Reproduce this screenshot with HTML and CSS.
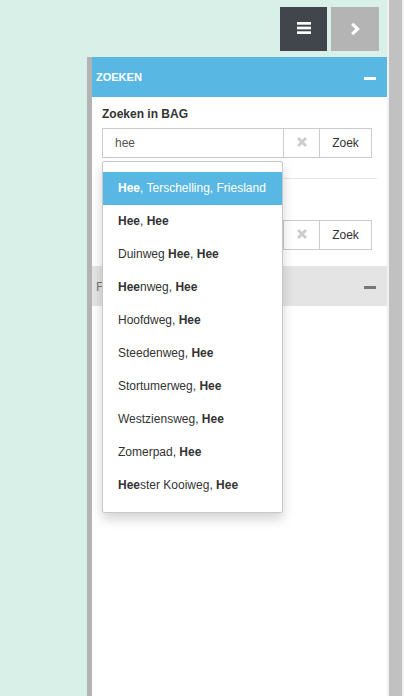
FILE: index.html
```html
<!DOCTYPE html>
<html lang="nl">
<head>
<meta charset="utf-8">
<title>Zoeken</title>
<link rel="stylesheet" href="styles.css">
</head>
<body>
<div class="page">
  <div class="main">
    <div class="toolbar">
      <button class="tb-btn tb-dark" type="button" aria-label="Menu">
        <svg width="14" height="12" viewBox="0 0 14 12"><rect x="0" y="0" width="14" height="2.7" fill="#fff"/><rect x="0" y="4.65" width="14" height="2.7" fill="#fff"/><rect x="0" y="9.3" width="14" height="2.7" fill="#fff"/></svg>
      </button>
      <button class="tb-btn tb-gray" type="button" aria-label="Volgende">
        <svg width="10" height="14" viewBox="0 0 10 14"><polyline points="2.2,1.8 7.6,7 2.2,12.2" fill="none" stroke="#fff" stroke-width="3.2"/></svg>
      </button>
    </div>
    <div class="panel">
      <div class="sec-head sec-active">
        <span class="sec-title">ZOEKEN</span>
        <span class="minus"></span>
      </div>
      <div class="sec-body">
        <div class="form-group">
          <label class="lbl">Zoeken in BAG</label>
          <div class="input-group">
            <div class="input">hee</div>
            <button class="btn-clear" type="button" aria-label="Wissen">
              <svg width="10" height="10" viewBox="0 0 10 10"><path d="M1 1 L9 9 M9 1 L1 9" stroke="#cccccc" stroke-width="3"/></svg>
            </button>
            <button class="btn-go" type="button">Zoek</button>
            <ul class="dropdown">
              <li class="active"><b>Hee</b>, Terschelling, Friesland</li>
              <li><b>Hee</b>, <b>Hee</b></li>
              <li>Duinweg <b>Hee</b>, <b>Hee</b></li>
              <li><b>Hee</b><span>nweg</span>, <b>Hee</b></li>
              <li>Hoofdweg, <b>Hee</b></li>
              <li>Steedenweg, <b>Hee</b></li>
              <li>Stortumerweg, <b>Hee</b></li>
              <li>Westziensweg, <b>Hee</b></li>
              <li>Zomerpad, <b>Hee</b></li>
              <li><b>Hee</b><span>ster Kooiweg</span>, <b>Hee</b></li>
            </ul>
          </div>
        </div>
        <div class="sep"></div>
        <div class="form-group">
          <label class="lbl">Adres zoeken</label>
          <div class="input-group">
            <div class="input"></div>
            <button class="btn-clear" type="button" aria-label="Wissen">
              <svg width="10" height="10" viewBox="0 0 10 10"><path d="M1 1 L9 9 M9 1 L1 9" stroke="#cccccc" stroke-width="3"/></svg>
            </button>
            <button class="btn-go" type="button">Zoek</button>
          </div>
        </div>
      </div>
      <div class="sec-head sec-muted">
        <span class="sec-title2">Favorieten</span>
        <span class="minus minus-gray"></span>
      </div>
    </div>
  </div>
  <div class="scrollbar"><div class="thumb"></div></div>
</div>
</body>
</html>
```
FILE: styles.css
```css
* { box-sizing: border-box; }
html, body {
  margin: 0;
  padding: 0;
  height: 100%;
  overflow: hidden;
}
body {
  font-family: "Liberation Sans", Arial, sans-serif;
  font-size: 12px;
  color: #333;
  background: #d9f0e8;
}
.page {
  display: flex;
  height: 696px;
}
.main {
  width: 387px;
  display: flex;
  flex-direction: column;
}
.toolbar {
  height: 57px;
  padding: 7px 8px 0 0;
  display: flex;
  justify-content: flex-end;
  align-items: flex-start;
  gap: 4px;
}
.tb-btn {
  height: 44px;
  border: 0;
  padding: 0;
  margin: 0;
  display: flex;
  align-items: center;
  justify-content: center;
}
.tb-dark { width: 47px; background: #41464c; }
.tb-gray { width: 48px; background: #b4b4b4; }
.tb-dark svg { margin-top: -2px; }
.panel {
  flex: 1;
  margin-left: 87px;
  border-left: 5px solid #b3b3b3;
  background: #fff;
  display: flex;
  flex-direction: column;
}
.sec-head {
  height: 40px;
  padding: 0 11px 0 4px;
  display: flex;
  align-items: center;
  justify-content: space-between;
}
.sec-active { background: #59b7e3; }
.sec-muted { background: #e4e4e4; }
.sec-title {
  color: #fff;
  font-weight: bold;
  font-size: 11px;
}
.sec-title2 {
  color: #777;
  font-size: 13px;
}
.minus {
  width: 12px;
  height: 3px;
  background: #fff;
  margin-top: 2px;
}
.minus-gray { background: #777; }
.sec-body {
  padding: 8px 15px 16px 10px;
}
.lbl {
  display: block;
  font-weight: bold;
  font-size: 12px;
  line-height: 18px;
  margin-bottom: 5px;
  color: #333;
}
.input-group {
  position: relative;
  display: flex;
  height: 30px;
}
.input {
  flex: 1;
  border: 1px solid #ccc;
  padding: 0 12px;
  line-height: 28px;
  font-size: 12px;
  color: #555;
}
.btn-clear {
  width: 37px;
  margin: 0 0 0 -1px;
  border: 1px solid #ccc;
  background: #fff;
  padding: 0;
  display: flex;
  align-items: center;
  justify-content: center;
}
.btn-clear svg { margin-top: -2px; }
.btn-go {
  width: 53px;
  margin: 0 0 0 -1px;
  border: 1px solid #ccc;
  background: #fff;
  padding: 0;
  font-family: "Liberation Sans", Arial, sans-serif;
  font-size: 12px;
  color: #333;
}
.sep {
  height: 1px;
  background: #e8e8e8;
  margin: 20px -5px 18px 0;
}
.dropdown {
  position: absolute;
  top: 100%;
  left: 0;
  margin: 3px 0 0 0;
  width: 181px;
  list-style: none;
  padding: 10px 0;
  background: #fff;
  border: 1px solid #c8c8c8;
  border-radius: 2px;
  box-shadow: 0 6px 12px rgba(0, 0, 0, 0.175);
  z-index: 10;
}
.dropdown li {
  height: 33px;
  line-height: 33px;
  padding: 0 15px;
  font-size: 12px;
  color: #333;
  white-space: nowrap;
}
.dropdown li.active {
  background: #59b7e3;
  color: #fff;
}
.scrollbar {
  width: 17px;
  background: #f1f1f1;
  padding: 0 2px;
}
.thumb {
  height: 100%;
  background: #c1c1c1;
}
```
